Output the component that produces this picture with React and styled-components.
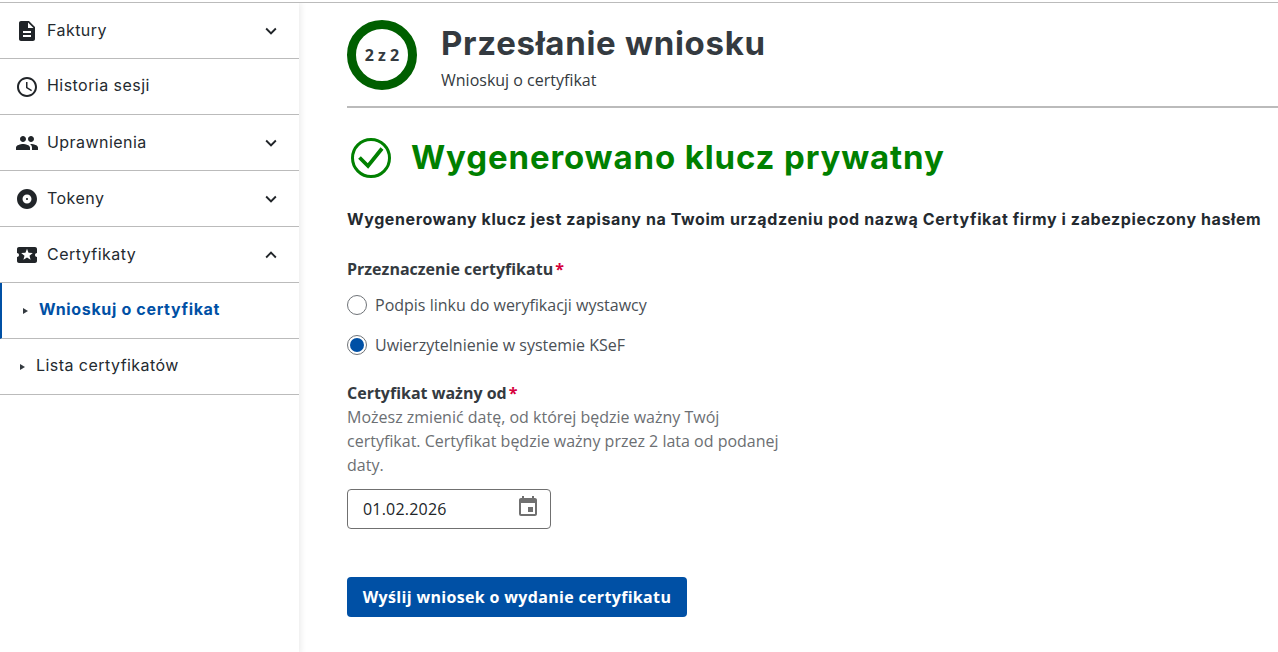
import React from "react";
import styled, { createGlobalStyle } from "styled-components";
import {
  MdDescription,
  MdAccessTime,
  MdPeople,
  MdAlbum,
  MdLocalActivity,
  MdExpandMore,
  MdExpandLess,
  MdEvent,
} from "react-icons/md";

const GlobalStyle = createGlobalStyle`
  html, body {
    margin: 0;
    height: 100%;
    overflow: hidden;
    background: #fff;
  }
  * { box-sizing: border-box; }
  body {
    font-family: "Open Sans", "Liberation Sans", sans-serif;
    color: #343a40;
  }
`;

const heading = `"Inter", "Liberation Sans", sans-serif`;

const Page = styled.div`
  height: 652px;
  border-top: 1px solid #bbb;
  margin-top: 2px;
  display: flex;
  overflow: hidden;
`;

const Sidebar = styled.nav`
  width: 299px;
  flex: none;
  box-shadow: 2px 0 6px rgba(0, 0, 0, 0.08);
`;

const NavRow = styled.div`
  height: 56px;
  display: flex;
  align-items: center;
  border-bottom: 1px solid #bbb;
  padding-left: ${(p) => p.$indent || 16}px;
  padding-right: 17px;
  border-left: ${(p) => (p.$active ? "2px solid #0050a5" : "none")};
  font-family: ${heading};
  font-size: 16px;
  color: #242a30;
`;

const NavIcon = styled.span`
  width: 32px;
  flex: none;
  display: flex;
  align-items: center;
  font-size: 24px;
  color: #212529;
  margin-left: -1px;
`;

const NavLabel = styled.span`
  flex: 1;
  margin-bottom: ${(p) => p.$lift}px;
  font-weight: ${(p) => (p.$active ? 700 : 400)};
  letter-spacing: ${(p) => (p.$active ? 0.66 : 0.45)}px;
  color: ${(p) => (p.$active ? "#0050a5" : "inherit")};
`;

const Chevron = styled.span`
  display: flex;
  font-size: 22px;
  color: #212529;
`;

const Marker = styled.span`
  width: 0;
  height: 0;
  flex: none;
  margin-right: ${(p) => p.$gap}px;
  border-left: 5px solid #343a40;
  border-top: 3px solid transparent;
  border-bottom: 3px solid transparent;
`;

const Main = styled.main`
  flex: 1;
  padding-left: 48px;
  min-width: 0;
`;

const StepHeader = styled.header`
  height: 105px;
  border-bottom: 2px solid #bbb;
  display: flex;
  align-items: flex-start;
  padding-top: 17px;
  gap: 24px;
`;

const StepCircle = styled.div`
  width: 70px;
  height: 70px;
  border: 9px solid #005f00;
  border-radius: 50%;
  display: flex;
  align-items: center;
  justify-content: center;
  font-size: 16px;
  font-weight: 700;
  color: #343a40;
`;

const StepText = styled.div`
  display: flex;
  flex-direction: column;
`;

const Title = styled.h1`
  margin: 0;
  font-family: ${heading};
  font-weight: 700;
  font-size: 33px;
  letter-spacing: 0.7px;
  line-height: 46px;
  color: #343a40;
`;

const Subtitle = styled.div`
  font-size: 16px;
  line-height: 22px;
  margin-top: 3px;
  color: #343a40;
`;

const SuccessRow = styled.div`
  display: flex;
  align-items: center;
  gap: 20px;
  margin-top: 28px;
  padding-left: 4px;
`;

const SuccessIcon = () => (
  <svg width="40" height="40" viewBox="0 0 40 40" fill="none" stroke="#008000">
    <circle cx="20" cy="20" r="18.5" strokeWidth="3" />
    <path d="M8.5 19.5 L17 28 L31 10.5" strokeWidth="3.8" />
  </svg>
);

const SuccessTitle = styled.h2`
  margin: 0 0 2px;
  font-family: ${heading};
  font-weight: 700;
  font-size: 33px;
  letter-spacing: 0.87px;
  line-height: 42px;
  color: #008000;
`;

const Info = styled.p`
  margin: 28px 0 0;
  font-family: ${heading};
  font-weight: 700;
  font-size: 16px;
  letter-spacing: 0.6px;
  line-height: 22px;
  color: #242a30;
  white-space: nowrap;
`;

const FieldLabel = styled.div`
  font-weight: 700;
  font-size: 16px;
  line-height: 22px;
  color: #343a40;
  margin-top: ${(p) => p.$top}px;
`;

const Required = styled.span`
  color: #d6003c;
  margin-left: 2px;
`;

const RadioRow = styled.label`
  display: flex;
  align-items: center;
  gap: 8px;
  height: 24px;
  margin-top: ${(p) => p.$top}px;
  font-size: 16px;
  color: #4a5056;
`;

const Radio = styled.span`
  width: 20px;
  height: 20px;
  border-radius: 50%;
  border: 1px solid #6f7378;
  display: flex;
  align-items: center;
  justify-content: center;

  &::after {
    content: "";
    width: 14px;
    height: 14px;
    border-radius: 50%;
    background: ${(p) => (p.$checked ? "#0050a5" : "transparent")};
  }
`;

const Hint = styled.p`
  margin: 1px 0 0;
  width: 440px;
  font-size: 16px;
  line-height: 24px;
  color: #6c6f73;
`;

const DateField = styled.div`
  width: 204px;
  height: 40px;
  margin-top: 12px;
  border: 1px solid #707070;
  border-radius: 4px;
  display: flex;
  align-items: center;
  justify-content: space-between;
  padding: 0 10px 0 15px;
  font-size: 16px;
  letter-spacing: 0.2px;
  color: #212529;

  svg {
    font-size: 24px;
    color: #707070;
    margin-top: -4px;
  }
`;

const SubmitButton = styled.button`
  display: block;
  width: 340px;
  height: 40px;
  margin-top: 48px;
  border: 0;
  border-radius: 4px;
  background: #0050a5;
  color: #fff;
  font-family: inherit;
  font-size: 16px;
  font-weight: 700;
  letter-spacing: 0.33px;
`;

const navItems = [
  { label: "Faktury", icon: <MdDescription />, chevron: "down" },
  { label: "Historia sesji", icon: <MdAccessTime /> },
  { label: "Uprawnienia", icon: <MdPeople />, chevron: "down" },
  { label: "Tokeny", icon: <MdAlbum />, chevron: "down" },
  { label: "Certyfikaty", icon: <MdLocalActivity />, chevron: "up" },
];

export default function App() {
  return (
    <>
      <GlobalStyle />
      <Page>
        <Sidebar>
          {navItems.map((item) => (
            <NavRow key={item.label}>
              <NavIcon>{item.icon}</NavIcon>
              <NavLabel $lift={item.chevron ? 1 : 3}>{item.label}</NavLabel>
              {item.chevron && (
                <Chevron>
                  {item.chevron === "up" ? <MdExpandLess /> : <MdExpandMore />}
                </Chevron>
              )}
            </NavRow>
          ))}
          <NavRow $active $indent={21}>
            <Marker $gap={11} />
            <NavLabel $active $lift={3}>
              Wnioskuj o certyfikat
            </NavLabel>
          </NavRow>
          <NavRow $indent={20}>
            <Marker $gap={11} />
            <NavLabel $lift={3}>Lista certyfikatów</NavLabel>
          </NavRow>
        </Sidebar>
        <Main>
          <StepHeader>
            <StepCircle>2 z 2</StepCircle>
            <StepText>
              <Title>Przesłanie wniosku</Title>
              <Subtitle>Wnioskuj o certyfikat</Subtitle>
            </StepText>
          </StepHeader>
          <SuccessRow>
            <SuccessIcon />
            <SuccessTitle>Wygenerowano klucz prywatny</SuccessTitle>
          </SuccessRow>
          <Info>
            Wygenerowany klucz jest zapisany na Twoim urządzeniu pod nazwą
            Certyfikat firmy i zabezpieczony hasłem
          </Info>
          <FieldLabel $top={28}>
            Przeznaczenie certyfikatu<Required>*</Required>
          </FieldLabel>
          <RadioRow $top={13}>
            <Radio />
            Podpis linku do weryfikacji wystawcy
          </RadioRow>
          <RadioRow $top={16}>
            <Radio $checked />
            Uwierzytelnienie w systemie KSeF
          </RadioRow>
          <FieldLabel $top={25}>
            Certyfikat ważny od<Required>*</Required>
          </FieldLabel>
          <Hint>
            Możesz zmienić datę, od której będzie ważny Twój certyfikat.
            Certyfikat będzie ważny przez 2 lata od podanej daty.
          </Hint>
          <DateField>
            01.02.2026
            <MdEvent />
          </DateField>
          <SubmitButton>Wyślij wniosek o wydanie certyfikatu</SubmitButton>
        </Main>
      </Page>
    </>
  );
}
